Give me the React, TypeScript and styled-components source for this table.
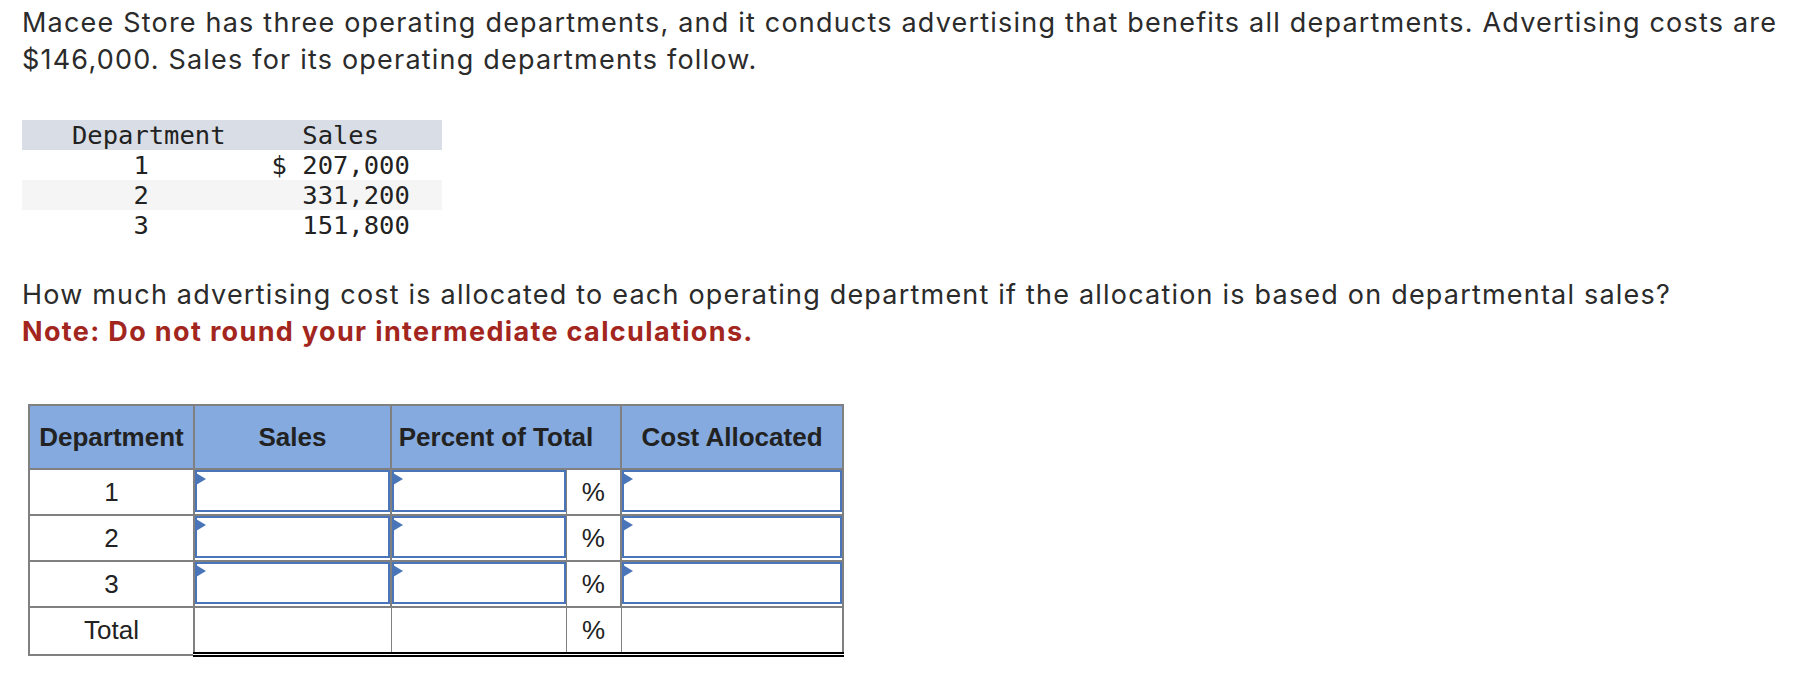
import React from "react";
import styled, { createGlobalStyle } from "styled-components";

const GlobalStyle = createGlobalStyle`
  html, body { margin: 0; padding: 0; background: #ffffff; }
  body { font-family: "Inter", "Lato", "Liberation Sans", sans-serif; color: #2b2b2b; }
`;

const Page = styled.div`
  padding: 4px 0 0 22px;
  width: 1798px;
  box-sizing: border-box;
`;

const Para = styled.p`
  margin: 0;
  font-family: "Inter", "Lato", sans-serif;
  font-size: 27px;
  letter-spacing: 1.2px;
  line-height: 37px;
  color: #2b2b2b;
`;

const Question = styled(Para)`
  margin-top: 36px;
`;

const Note = styled.span`
  display: block;
  color: #a3261e;
  font-weight: 700;
  letter-spacing: 1.35px;
`;

const DataTable = styled.div`
  margin-top: 42px;
  width: 420px;
  font-family: "DejaVu Sans Mono", "Liberation Mono", monospace;
  font-size: 25.5px;
  color: #222;
`;

const DataRow = styled.div<{ $bg?: string }>`
  height: 30px;
  line-height: 30px;
  padding-left: 50px;
  white-space: pre;
  background: ${(p) => p.$bg || "transparent"};
`;

const AnswerTable = styled.table`
  margin-top: 54px;
  margin-left: 6px;
  border-collapse: collapse;
  table-layout: fixed;
  font-family: "Liberation Sans", Arial, sans-serif;
  font-size: 26px;
  color: #222;
`;

const Th = styled.th<{ $padRight?: number }>`
  background: #84aadf;
  border: 2px solid #808080;
  height: 62px;
  padding: 0 ${(p) => p.$padRight || 0}px 0 0;
  font-weight: 700;
  text-align: center;
  vertical-align: middle;
`;

const LabelCell = styled.td`
  border: 2px solid #808080;
  height: 44px;
  padding: 0;
  text-align: center;
  vertical-align: middle;
`;

const InputCell = styled.td`
  border: 2px solid #808080;
  height: 44px;
  padding: 0;
  vertical-align: top;
`;

const PctInputCell = styled(InputCell)`
  border-right: 1px solid #808080;
`;

const PctSign = styled.td<{ $total?: boolean }>`
  border: 2px solid #808080;
  border-left: 1px solid #808080;
  height: 44px;
  padding: 0;
  text-align: center;
  vertical-align: middle;
  ${(p) =>
    p.$total &&
    `border-top: 2px solid #000; border-bottom: 5px double #000; border-left: 1px solid #808080; border-right: 1px solid #808080;`}
`;

const TotalCell = styled.td<{ $edge?: boolean }>`
  border-top: 2px solid #000;
  border-bottom: 5px double #000;
  border-left: 1px solid #808080;
  border-right: ${(p) => (p.$edge ? "2px" : "1px")} solid #808080;
  height: 44px;
  padding: 0;
`;

const InputBox = styled.div`
  position: relative;
  height: 42px;
  border: 2px solid #4a76b9;
  box-sizing: border-box;
  background: #fff;
`;

const Flag = styled.span`
  position: absolute;
  left: -1px;
  top: 1px;
  width: 0;
  height: 0;
  border-top: 6px solid transparent;
  border-bottom: 6px solid transparent;
  border-left: 10px solid #4a76b9;
`;

const Entry = () => (
  <InputBox>
    <Flag />
  </InputBox>
);

const rows = ["1", "2", "3"];

export default function App() {
  return (
    <>
      <GlobalStyle />
      <Page>
        <Para>
          Macee Store has three operating departments, and it conducts advertising that benefits all departments. Advertising costs are
          <br />
          $146,000. Sales for its operating departments follow.
        </Para>

        <DataTable>
          <DataRow $bg="#d9dde5">{"Department     Sales"}</DataRow>
          <DataRow>{"    1        $ 207,000"}</DataRow>
          <DataRow $bg="#f5f5f5">{"    2          331,200"}</DataRow>
          <DataRow>{"    3          151,800"}</DataRow>
        </DataTable>

        <Question>
          How much advertising cost is allocated to each operating department if the allocation is based on departmental sales?
          <Note>Note: Do not round your intermediate calculations.</Note>
        </Question>

        <AnswerTable>
          <colgroup>
            <col style={{ width: 165 }} />
            <col style={{ width: 197 }} />
            <col style={{ width: 175 }} />
            <col style={{ width: 55 }} />
            <col style={{ width: 222 }} />
          </colgroup>
          <thead>
            <tr>
              <Th>Department</Th>
              <Th>Sales</Th>
              <Th colSpan={2} $padRight={20}>
                Percent of Total
              </Th>
              <Th>Cost Allocated</Th>
            </tr>
          </thead>
          <tbody>
            {rows.map((r) => (
              <tr key={r}>
                <LabelCell>{r}</LabelCell>
                <InputCell>
                  <Entry />
                </InputCell>
                <PctInputCell>
                  <Entry />
                </PctInputCell>
                <PctSign>%</PctSign>
                <InputCell>
                  <Entry />
                </InputCell>
              </tr>
            ))}
            <tr>
              <LabelCell>Total</LabelCell>
              <TotalCell />
              <TotalCell />
              <PctSign $total>%</PctSign>
              <TotalCell $edge />
            </tr>
          </tbody>
        </AnswerTable>
      </Page>
    </>
  );
}
